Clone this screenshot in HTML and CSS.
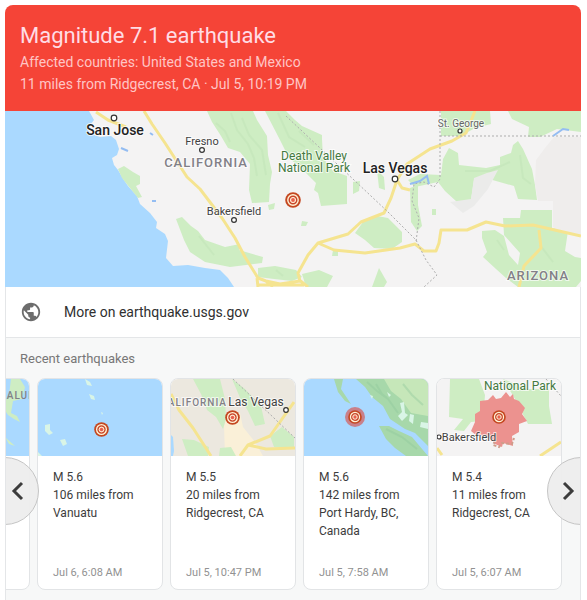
FILE: index.html
```html
<!DOCTYPE html>
<html lang="en">
<head>
<meta charset="utf-8">
<title>Magnitude 7.1 earthquake</title>
<meta name="viewport" content="width=device-width, initial-scale=1">
<link rel="stylesheet" href="styles.css">
</head>
<body>
<svg class="defs" aria-hidden="true">
  <symbol id="epicenter" viewBox="0 0 16 16">
    <circle cx="8" cy="8" r="7.8" fill="#c44720"/>
    <circle cx="8" cy="8" r="5.2" fill="#c9452a" stroke="#fff3d6" stroke-width="1.4"/>
    <circle cx="8" cy="8" r="2.6" fill="#ffe9dc" stroke="#fff3d6"/>
    <circle cx="8" cy="8" r="1.9" fill="#e8604c"/>
  </symbol>
</svg>
<main class="panel">
  <header class="alert">
    <h1 class="alert-title">Magnitude 7.1 earthquake</h1>
    <p class="alert-line">Affected countries: United States and Mexico</p>
    <p class="alert-line">11 miles from Ridgecrest, CA · Jul 5, 10:19 PM</p>
  </header>

  <svg class="map" viewBox="5 111 576 176" preserveAspectRatio="xMidYMid slice" role="img" aria-label="Map of the area around Ridgecrest, CA">
    <rect x="5" y="111" width="576" height="176" fill="#f4f3f3"/>
    <path class="water" d="M5 111H89L94 120L87 129L91 134L100 137L111 136L116 140L119 149L117 155L112 158L114 165L118 170L124 180L128 186L137 196L140 204L150 213L157 222L156 228L165 234L168 241L166 258L173 266L188 265L205 268L220 270L228 278L234 287H5Z"/>
    <g class="park">
      <path d="M118 169L124 166L133 172L140 176L140 184L136 186L142 197L138 198L130 188L122 178Z"/>
      <path d="M176 219L182 217L191 226L198 231L205 240L225 247L240 244L239 250L263 257L262 263L246 265L230 267L205 262L190 252L184 240Z"/>
      <path d="M207 111H253L257 120L267 136L268 155L272 172L270 184L269 202L252 203L249 190L250 164L240 152L228 148L221 136L212 122Z"/>
      <path d="M265 111H286L295 120L302 126L322 135V139L323 158L333 171L347 176L347 204L321 206L318 193L314 190L316 183L303 170L289 158L280 140Z"/>
      <path d="M353 182L360 181L359 191L353 194Z"/>
      <path d="M377 170L384 177L385 190L379 188Z"/>
      <path d="M355 233L363 222L377 216L388 218L402 232L402 242L392 249L374 248L365 240Z"/>
      <path d="M258 268L275 266L296 270L302 277L292 281L274 279L258 277Z"/>
      <path d="M302 274L319 270L333 276L327 287H306Z"/>
      <path d="M372 287L379 268L387 282L384 287Z"/>
      <path d="M268 205L275 203L274 209L269 210Z"/>
      <path d="M302 221L308 222L306 226L301 226Z"/>
      <path d="M333 250H338V256H332Z"/>
      <path d="M441 111H490L491 124L475 128L461 136H441Z"/>
      <path d="M508 111H581V132L557 129L540 137H528L529 127L512 119Z"/>
      <path d="M443 159L449 148L458 153L459 165L486 168L500 165L500 157L511 153L513 145L518 141L523 149L532 169L535 185L537 200L518 199L514 186L489 179L474 180L471 200L457 202L445 191L438 182L415 187L408 180L420 174L441 175Z"/>
      <path d="M410 188L418 185L418 205L422 226L417 231L411 222Z"/>
      <path d="M432 209H436V215H432Z"/>
      <path d="M521 210H552V228L568 231L565 251L575 257L581 258V281L576 287H518L506 278L496 269L483 257L487 252L482 238L482 231L495 230L504 236L509 255L518 265L520 253L504 235L503 218H520Z"/>
    </g>
    <path d="M536 160L545 148L554 137H581V236L561 232L553 227V201H538L535 184Z" fill="#efedec"/>
    <path d="M471 199L474 178L487 173L498 170L488 189L474 206L463 213L450 202Z" fill="#ebebea"/>
    <path class="terrain" d="M231 113L237 130L248 144L254 158L257 176M242 118L249 135L262 150L266 175M278 113L289 137L305 147M465 171L490 171L510 162M520 155L523 178L531 184M497 240L504 250M540 245L553 262M216 123L225 131L230 142M299 131L314 145M199 236L214 255M276 270L283 276"/>
    <path class="road" d="M96 112L108 120L126 127M144 111L152 124L165 143L187 177L200 189L222 218L235 238L245 257L258 278L266 281L280 284L300 281L298 273L308 255L318 243L348 234L361 222L384 213L391 198L397 180L407 164L430 149L452 141L466 133L475 111M318 243L334 250L365 253L400 248L415 244L424 251L436 251L439 243L441 230L455 230L467 230L486 222L505 226L533 225L559 231L581 236M539 230L541 248L524 266L519 287M397 180L402 188L410 190M257 278L258 287M266 281L273 287M298 279L308 287M258 285H304"/>
    <path class="border" d="M286 116L388 212L416 240L426 260L437 275L424 287M440 111V179L434 187L424 182L414 184L412 201L419 218L416 242M440 136H581"/>
    <path class="river" d="M410 184L420 181L427 176L429 184M553 136L563 129L569 130M121 148L128 151M150 133L153 135M152 201L156 201"/>
    <g class="town">
      <circle cx="114" cy="118" r="2.8"/><circle cx="202" cy="150" r="2.4"/><circle cx="234" cy="220" r="2.4"/><circle cx="395" cy="179" r="2.8"/><circle cx="460" cy="131" r="2"/>
    </g>
    <g class="label">
      <text class="city" x="115" y="135">San Jose</text>
      <text x="202" y="145">Fresno</text>
      <text class="state" x="206" y="167">CALIFORNIA</text>
      <text x="234" y="215">Bakersfield</text>
      <text class="green-label" x="314" y="160">Death Valley</text>
      <text class="green-label" x="314" y="172">National Park</text>
      <text class="city" x="395" y="173">Las Vegas</text>
      <text class="faint" x="461" y="127">St. George</text>
      <text class="state" x="538" y="280">ARIZONA</text>
    </g>
    <use href="#epicenter" x="285" y="192" width="16" height="16"/>
  </svg>

  <a class="more" href="#">
    <svg class="globe" viewBox="0 0 24 24" aria-hidden="true"><path d="M12 2C6.48 2 2 6.48 2 12s4.480 10 10 10 10-4.480 10-10S17.520 2 12 2zm-1 17.930c-3.950-.49-7-3.850-7-7.930 0-.62.080-1.210.21-1.790L9 15v1c0 1.100.9 2 2 2v1.930zm6.900-2.540c-.26-.81-1-1.390-1.900-1.390h-1v-3c0-.55-.45-1-1-1H8v-2h2c.55 0 1-.45 1-1V7h2c1.100 0 2-.9 2-2v-.41c2.930 1.190 5 4.060 5 7.410 0 2.080-.8 3.970-2.100 5.390z"/></svg>
    <span>More on earthquake.usgs.gov</span>
  </a>

  <section class="recent">
    <h2 class="recent-title">Recent earthquakes</h2>
    <div class="carousel">
      <ul class="track">
        <li class="card">
          <svg class="thumb" viewBox="0 0 124 77" preserveAspectRatio="xMaxYMid slice" aria-hidden="true">
            <rect class="water" width="124" height="77"/>
            <path class="park" d="M106 0H115L120 8L117 20L108 22L106 34L112 37L115 43L109 40L103 36L97 27L104 16ZM100 58L110 67L104 65Z"/>
            <text class="state small" x="138" y="20" text-anchor="end">ALUKU</text>
          </svg>
        </li>
        <li class="card">
          <svg class="thumb" viewBox="0 0 124 77" preserveAspectRatio="xMidYMid slice" aria-hidden="true">
            <rect class="water" width="124" height="77"/>
            <path class="isle" d="M47 0L52 3L54 7L49 6ZM51 15L56 17L57 21L53 20ZM63 33L65 34L64 36ZM7 46L12 45L12 51L15 54L11 56L7 52ZM22 61L27 60L29 65L25 67ZM0 73L4 77H0Z"/>
            <use href="#epicenter" x="56" y="43" width="15" height="15"/>
          </svg>
          <div class="card-text">
            <p>M 5.6<br>106 miles from Vanuatu</p>
            <time>Jul 6, 6:08 AM</time>
          </div>
        </li>
        <li class="card">
          <svg class="thumb" viewBox="0 0 124 77" preserveAspectRatio="xMidYMid slice" aria-hidden="true">
            <rect width="124" height="77" fill="#ece8df"/>
            <path d="M56 34H69L72 48L84 63L92 77H54L53 47Z" fill="#faf0d8"/>
            <g class="park">
              <path d="M22 0H49L54 20L55 40L52 50L45 38L36 31L30 15Z"/><path d="M61 0L74 10L90 27L94 45L84 47L77 32L70 21Z"/><path d="M11 60L23 61L38 68L37 77H17ZM99 57L111 48L123 58V68L103 68ZM49 69L60 68L65 77H48Z"/>
            </g>
            <path class="water" d="M0 56L2 58L3 72L2 77H0Z"/>
            <path class="road" d="M0 15L8 31L22 49L40 77M69 77L77 66L99 57L123 23M77 66L95 70L124 69"/>
            <path class="border" d="M62 0L124 59"/>
            <g class="label"><text class="state small end" x="56" y="27">CALIFORNIA</text><text class="thumb-city" x="85" y="27">Las Vegas</text></g>
            <g class="town"><circle cx="115" cy="31" r="2.3"/></g>
            <use href="#epicenter" x="54" y="31" width="15" height="15"/>
          </svg>
          <div class="card-text">
            <p>M 5.5<br>20 miles from Ridgecrest, CA</p>
            <time>Jul 5, 10:47 PM</time>
          </div>
        </li>
        <li class="card">
          <svg class="thumb" viewBox="0 0 124 77" preserveAspectRatio="xMidYMid slice" aria-hidden="true">
            <rect class="water" width="124" height="77"/>
            <path d="M30 0H39L37 10L47 25L41 22L34 13ZM52 0H124V67L111 54L101 50L86 40L79 27L68 18L61 8ZM75 47L85 47L95 52L108 58L124 77H102L91 69L82 60Z" fill="#a7d8aa"/>
            <path d="M80 0H124V37L107 34L97 20L87 12Z" fill="#c6e7b9"/>
            <path class="isle" d="M83 13L87 16L85 18ZM96 24L100 23L101 34L104 36L98 42L94 37L98 33ZM106 35L110 36L109 45L105 42ZM117 43L124 44V50L116 48ZM66 16L69 17L68 20Z"/>
            <path class="inlet" d="M63 3L73 12L84 20L94 34M99 5L108 16L119 26M82 50L98 58L113 70M72 5L78 15L83 19"/>
            <circle cx="51" cy="38" r="10" fill="#c9808a"/>
            <use href="#epicenter" x="44" y="31" width="14" height="14"/>
          </svg>
          <div class="card-text">
            <p>M 5.6<br>142 miles from Port Hardy, BC, Canada</p>
            <time>Jul 5, 7:58 AM</time>
          </div>
        </li>
        <li class="card">
          <svg class="thumb" viewBox="0 0 124 77" preserveAspectRatio="xMidYMid slice" aria-hidden="true">
            <rect width="124" height="77" fill="#f4f3f3"/>
            <path class="park" d="M13 0H42L48 16L46 42L34 43L27 52L17 51L26 40L12 38ZM66 0L91 10H112V27L115 45H91L78 20Z"/>
            <path class="road" d="M0 69L5 76M103 77L115 69L124 63"/>
            <path class="border" d="M109 0L124 17"/>
            <path d="M69 13L64 19L59 20L56 16L51 21L43 22L43 32L38 35L38 43L34 52L39 56L49 57L55 61L58 65L65 68L66 64L76 67L75 57L82 53L82 45L90 42L85 35L88 29L82 22L77 20L76 15L73 18Z" fill="#ec928f"/>
            <path d="M58 62L56 66L62 68L65 64L75 65L77 59" fill="none" stroke="#cf9c8a" stroke-width="2" stroke-dasharray="3 2"/>
            <g class="label"><text class="thumb-park" x="83" y="11">National Park</text><text x="32" y="62">Bakersfield</text></g>
            <g class="town"><circle cx="2" cy="58" r="2"/></g>
            <use href="#epicenter" x="55" y="31" width="14" height="14"/>
          </svg>
          <div class="card-text">
            <p>M 5.4<br>11 miles from Ridgecrest, CA</p>
            <time>Jul 5, 6:07 AM</time>
          </div>
        </li>
      </ul>
      <button class="arrow prev" type="button" aria-label="Previous earthquakes"><svg viewBox="0 0 20 20" aria-hidden="true"><path d="M14 2L6 10L14 18"/></svg></button>
      <button class="arrow next" type="button" aria-label="Next earthquakes"><svg viewBox="0 0 20 20" aria-hidden="true"><path d="M6 2L14 10L6 18"/></svg></button>
    </div>
  </section>
</main>
</body>
</html>
```
FILE: styles.css
```css
* {
  box-sizing: border-box;
}

body {
  margin: 0;
  padding: 5px 6px 0 5px;
  background: #fff;
  color: #3c3c3c;
  font-family: Roboto, "Liberation Sans", sans-serif;
}

h1, h2, p, ul {
  margin: 0;
  padding: 0;
}

.defs {
  position: absolute;
  width: 0;
  height: 0;
}

.panel {
  overflow: hidden;
  min-height: calc(100vh - 5px);
  background: #f7f8f8;
  border-radius: 8px 8px 0 0;
}

.alert {
  padding: 16px 15px;
  background: #f54437;
  color: #ffc5c5;
}

.alert-title {
  font-size: 22px;
  line-height: 30px;
  font-weight: 400;
  color: #ffdce5;
}

.alert-line {
  font-size: 14px;
  line-height: 22px;
}

.map {
  display: block;
  width: 100%;
}

.water {
  fill: #aad9ff;
}

.park {
  fill: #ceedc3;
}

.isle {
  fill: #d9f5e6;
}

.terrain {
  fill: none;
  stroke: #bfe2b5;
  stroke-width: 2;
  opacity: 0.4;
}

.inlet {
  fill: none;
  stroke: #8fc79a;
  stroke-width: 2;
  opacity: 0.4;
}

.road {
  fill: none;
  stroke: #f5e490;
  stroke-width: 3;
  stroke-linejoin: round;
}

.border {
  fill: none;
  stroke: #adadad;
  stroke-width: 1;
  stroke-dasharray: 2 2;
}

.river {
  fill: none;
  stroke: #94bdf2;
  stroke-width: 2;
}

.town {
  fill: #fff;
  stroke: #333;
  stroke-width: 1.2;
}

.label {
  fill: #424242;
  font-size: 11px;
  text-anchor: middle;
  paint-order: stroke;
  stroke: rgba(255, 255, 255, 0.7);
  stroke-width: 2px;
}

.city {
  fill: #222;
  font-size: 14px;
  font-weight: 500;
}

.state {
  fill: #828087;
  font-size: 13px;
  font-weight: 500;
  letter-spacing: 1px;
}

.small {
  font-size: 10px;
}

.end {
  text-anchor: end;
}

.green-label {
  fill: #44793f;
  font-size: 12px;
}

.faint {
  fill: #666;
  font-size: 10px;
}

.thumb-city {
  font-size: 12px;
}

.thumb-park {
  fill: #44793f;
  font-size: 12px;
}

.more {
  display: flex;
  align-items: center;
  gap: 22px;
  height: 51px;
  padding: 0 14px;
  background: #fff;
  border: 1px solid #e4e6e8;
  border-top: 0;
  color: #303030;
  font-size: 14px;
  text-decoration: none;
}

.globe {
  width: 22px;
  height: 22px;
  fill: #6d6d6d;
}

.recent {
  border: solid #e4e6e8;
  border-width: 0 1px;
}

.recent-title {
  padding: 10px 14px 8px;
  color: #777;
  font-size: 13px;
  line-height: 22px;
  font-weight: 400;
}

.carousel {
  position: relative;
  overflow: hidden;
  padding-bottom: 10px;
}

.track {
  display: flex;
  gap: 7px;
  margin-left: -102px;
  list-style: none;
}

.card {
  display: flex;
  flex: 0 0 126px;
  flex-direction: column;
  min-height: 212px;
  overflow: hidden;
  background: #fff;
  border: 1px solid #e2e4e6;
  border-radius: 8px;
}

.thumb {
  display: block;
  width: 100%;
}

.card-text {
  display: flex;
  flex: 1;
  flex-direction: column;
  justify-content: space-between;
  padding: 12px 12px 7px 15px;
  font-size: 12px;
  line-height: 18px;
}

.card-text time {
  color: #929292;
  font-size: 11px;
}

.arrow {
  position: absolute;
  top: 79px;
  display: flex;
  align-items: center;
  width: 68px;
  height: 68px;
  padding: 0;
  background: rgba(237, 237, 237, 0.94);
  border: 1px solid #c5c5c5;
  border-radius: 50%;
}

.arrow svg {
  width: 20px;
  height: 20px;
  fill: none;
  stroke: #3c3c3c;
  stroke-width: 3;
}

.prev {
  left: -35px;
  justify-content: flex-end;
  padding-right: 10px;
}

.next {
  right: -35px;
  padding-left: 10px;
}
```
